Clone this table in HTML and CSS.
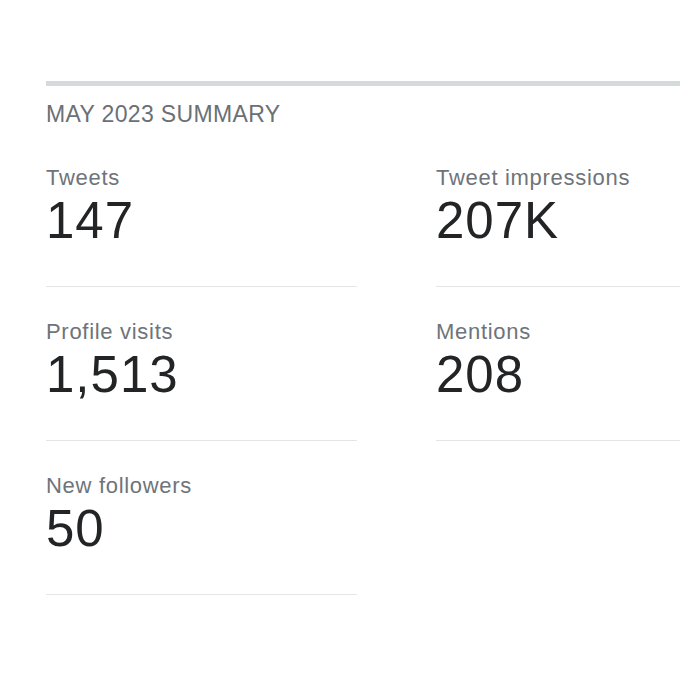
FILE: index.html
```html
<!DOCTYPE html>
<html lang="en">
<head>
<meta charset="utf-8">
<title>May 2023 Summary</title>
<link rel="stylesheet" href="styles.css">
</head>
<body>
<div class="page">
  <section class="summary">
    <div class="topbar"></div>
    <h2 class="heading">MAY 2023 SUMMARY</h2>
    <div class="grid">
      <div class="cell">
        <div class="label">Tweets</div>
        <div class="value">147</div>
      </div>
      <div class="cell">
        <div class="label">Tweet impressions</div>
        <div class="value">207K</div>
      </div>
      <div class="cell">
        <div class="label">Profile visits</div>
        <div class="value">1,513</div>
      </div>
      <div class="cell">
        <div class="label">Mentions</div>
        <div class="value">208</div>
      </div>
      <div class="cell">
        <div class="label">New followers</div>
        <div class="value">50</div>
      </div>
    </div>
  </section>
</div>
</body>
</html>
```

FILE: styles.css
```css
html, body {
  margin: 0;
  padding: 0;
  background: #ffffff;
  overflow: hidden;
}

.page {
  width: 680px;
  height: 680px;
  overflow: hidden;
  font-family: "Liberation Sans", Arial, Helvetica, sans-serif;
}

.summary {
  width: 720px;
  padding: 81px 0 0 46px;
}

.topbar {
  height: 5px;
  background: #d5dadd;
}

.heading {
  margin: 14px 0 0 0;
  font-size: 23px;
  line-height: 28px;
  font-weight: normal;
  letter-spacing: 0.35px;
  color: #6b7075;
}

.grid {
  margin-top: 5px;
  display: grid;
  grid-template-columns: 311px 311px;
  column-gap: 79px;
}

.cell {
  padding: 32px 0 38px 0;
  border-bottom: 1.5px solid #e4e5e6;
}

.label {
  font-size: 22px;
  line-height: 26px;
  letter-spacing: 0.7px;
  color: #6e7479;
}

.value {
  margin-top: 3px;
  font-size: 51px;
  line-height: 54px;
  letter-spacing: 1px;
  color: #222426;
}
```
